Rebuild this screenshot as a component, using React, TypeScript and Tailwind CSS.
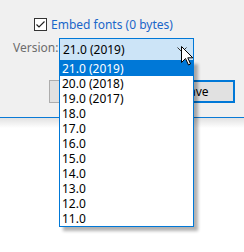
import React from "react";

const versions = [
  "21.0 (2019)",
  "20.0 (2018)",
  "19.0 (2017)",
  "18.0",
  "17.0",
  "16.0",
  "15.0",
  "14.0",
  "13.0",
  "12.0",
  "11.0",
];

function Cursor() {
  return (
    <svg width="13" height="20" viewBox="0 0 13 20" className="absolute left-[181px] top-[46px]">
      <path
        d="M0.5 0.5 L0.5 16.5 L4.5 12.5 L7.5 19 L9.5 18 L6.8 11.8 L11.8 11.8 Z"
        fill="#fff"
        stroke="#000"
        strokeWidth="1"
        strokeLinejoin="miter"
      />
    </svg>
  );
}

export default function App() {
  return (
    <div
      className="relative w-[244px] h-[252px] overflow-hidden bg-white text-[12px] leading-none text-black"
      style={{ fontFamily: '"Noto Sans", "Open Sans", sans-serif' }}
    >
      <div className="h-[117px] bg-[#f0f0f0] pt-[18px]">
        <div className="flex items-center ml-[34px] h-[13px] gap-[4px]">
          <div className="w-[13px] h-[13px] border border-[#333] bg-white flex items-center justify-center">
            <svg width="11" height="11" viewBox="0 0 11 11">
              <path d="M1.5 5.5 L4 8 L9.5 2.5" fill="none" stroke="#222" strokeWidth="1.2" />
            </svg>
          </div>
          <span className="text-[#1a66c9]">Embed fonts (0 bytes)</span>
        </div>

        <div className="flex items-start mt-[7px]">
          <span className="ml-[13px] mt-[4px] text-[#6d6d6d] w-[46px]">Version:</span>
          <div className="w-[135px] h-[23px] border border-[#0078d7] bg-[#cce4f7] flex items-center justify-between pl-[3px] pr-[6px]">
            <span>21.0 (2019)</span>
            <svg width="10" height="6" viewBox="0 0 10 6">
              <path d="M0.5 0.5 L5 5 L9.5 0.5" fill="none" stroke="#333" strokeWidth="1" />
            </svg>
          </div>
        </div>

        {/* buttons sit behind the open dropdown */}
        <div className="flex mt-[19px] ml-[49px] gap-[26px]">
          <button className="w-[80px] h-[23px] border border-[#adadad] bg-[#e1e1e1]" />
          <button className="w-[80px] h-[23px] border-2 border-[#0078d7] bg-[#e1e1e1] pl-[1px]">Save</button>
        </div>
      </div>
      <div className="h-px bg-[#0a7ad6]" />
      <div className="h-[10px] bg-gradient-to-b from-[#e2e2e2] to-white" />

      <div className="absolute left-[59px] top-[60px] w-[135px] border border-[#0078d7] bg-white shadow-[4px_4px_3px_rgba(0,0,0,0.3)]">
        {versions.map((v, i) => (
          <div
            key={v}
            className={
              "h-[15px] flex items-center pl-[2px] " +
              (i === 0 ? "bg-[#0078d7] text-white" : "text-black")
            }
          >
            {v}
          </div>
        ))}
      </div>

      <Cursor />
    </div>
  );
}
